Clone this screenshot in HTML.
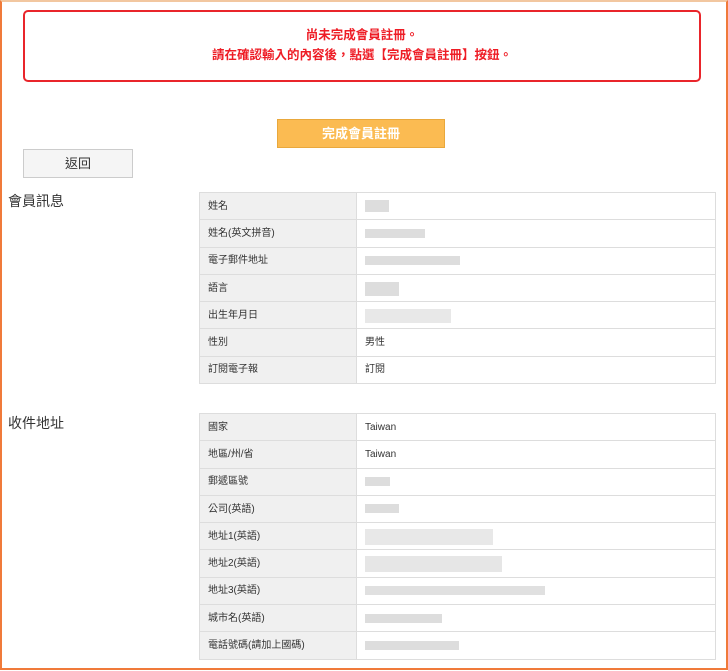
<!DOCTYPE html>
<html><head><meta charset="utf-8"><style>
*{box-sizing:border-box;margin:0;padding:0}
body{width:728px;height:671px;background:#fff;font-family:"Liberation Sans","Noto Sans CJK TC",sans-serif;position:relative;overflow:hidden}
.frame{position:absolute;left:0;top:0;width:728px;height:670px;border:2px solid #f07a3a;border-top:2px solid #f2c7a0}
.alert{position:absolute;left:23px;top:10px;width:678px;height:72px;border:2px solid #e9252b;border-radius:5px;text-align:center;color:#ee1c25;font-weight:bold;font-size:12.5px;padding-top:13px;line-height:20px}
.btn{position:absolute;left:277px;top:119px;width:168px;height:29px;background:#fbbb52;border:1px solid #e9a83c;color:#fff;font-weight:bold;font-size:13px;text-align:center;line-height:27px}
.back{position:absolute;left:23px;top:149px;width:110px;height:29px;background:#f5f5f5;border:1px solid #ccc;text-align:center;line-height:27px;font-size:13px;color:#333}
.h{position:absolute;left:8px;font-size:14px;color:#333}
table{position:absolute;left:199px;width:517px;border-collapse:collapse;font-size:10px;color:#333}
td{height:27.3px;border:1px solid #ddd;padding-left:8px;line-height:12px;vertical-align:middle;padding-top:1px}
td.l{width:157px;background:#f0f0f0}
.b{display:inline-block;height:9px;background:#ddd;vertical-align:middle}
</style></head><body>
<div class="frame"></div>
<div class="alert">尚未完成會員註冊。<br>請在確認輸入的內容後，點選【完成會員註冊】按鈕。</div>
<div class="btn">完成會員註冊</div>
<div class="back">返回</div>
<div class="h" style="top:191px">會員訊息</div>
<table style="top:192px">
<tr><td class="l">姓名</td><td><span class="b" style="width:24px;height:12px"></span></td></tr>
<tr><td class="l">姓名(英文拼音)</td><td><span class="b" style="width:60px"></span></td></tr>
<tr><td class="l">電子郵件地址</td><td><span class="b" style="width:95px"></span></td></tr>
<tr><td class="l">語言</td><td><span class="b" style="width:34px;height:14px"></span></td></tr>
<tr><td class="l">出生年月日</td><td><span class="b" style="width:86px;height:14px;background:#e8e8e8"></span></td></tr>
<tr><td class="l">性別</td><td>男性</td></tr>
<tr><td class="l">訂閱電子報</td><td>訂閱</td></tr>
</table>
<div class="h" style="top:413px">收件地址</div>
<table style="top:413px">
<tr><td class="l">國家</td><td>Taiwan</td></tr>
<tr><td class="l">地區/州/省</td><td>Taiwan</td></tr>
<tr><td class="l">郵遞區號</td><td><span class="b" style="width:25px"></span></td></tr>
<tr><td class="l">公司(英語)</td><td><span class="b" style="width:34px"></span></td></tr>
<tr><td class="l">地址1(英語)</td><td><span class="b" style="width:128px;height:16px;background:#e8e8e8"></span></td></tr>
<tr><td class="l">地址2(英語)</td><td><span class="b" style="width:137px;height:16px;background:#e6e6e6"></span></td></tr>
<tr><td class="l">地址3(英語)</td><td><span class="b" style="width:180px;background:#e0e0e0"></span></td></tr>
<tr><td class="l">城市名(英語)</td><td><span class="b" style="width:77px"></span></td></tr>
<tr><td class="l">電話號碼(請加上國碼)</td><td><span class="b" style="width:94px"></span></td></tr>
</table>
</body></html>
